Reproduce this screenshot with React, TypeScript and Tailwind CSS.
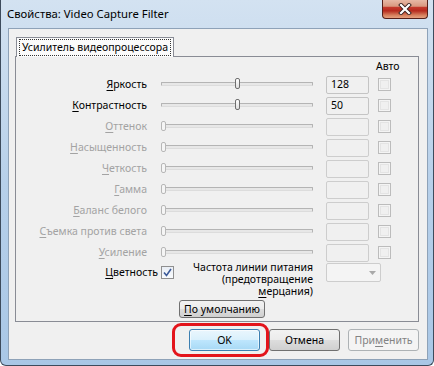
import React from "react";

type Row = { label: string; enabled: boolean; value?: string };

const rows: Row[] = [
  { label: "Яркость", enabled: true, value: "128" },
  { label: "Контрастность", enabled: true, value: "50" },
  { label: "Оттенок", enabled: false },
  { label: "Насыщенность", enabled: false },
  { label: "Четкость", enabled: false },
  { label: "Гамма", enabled: false },
  { label: "Баланс белого", enabled: false },
  { label: "Съемка против света", enabled: false },
  { label: "Усиление", enabled: false },
];

function Key({ label }: { label: string }) {
  return (
    <>
      <span className="underline decoration-1 underline-offset-[2px]">{label[0]}</span>
      {label.slice(1)}
    </>
  );
}

function Slider({ enabled }: { enabled: boolean }) {
  return (
    <div className="relative ml-[14px] h-[21px] w-[152px]">
      <div className="absolute left-0 right-0 top-[8px] h-[4px] rounded-[1px] border border-[#b4b4b4] border-b-[#dcdcdc] bg-[#e7e7e7]" />
      {enabled ? (
        <div className="absolute left-[74px] top-[4px] h-[11px] w-[5px] rounded-[2px] border border-[#6f6f6f] bg-gradient-to-b from-white to-[#dedede]" />
      ) : (
        <div className="absolute left-0 top-[5px] h-[10px] w-[5px] rounded-[2px] border border-[#b7b7b7] bg-[#f5f5f5]" />
      )}
    </div>
  );
}

function CheckBox() {
  return (
    <div className="h-[13px] w-[13px] border border-[#bcbcbc] bg-[#f4f4f4] p-px">
      <div className="h-full w-full border border-[#e4e4e4] bg-[#f0f0f0]" />
    </div>
  );
}

export default function App() {
  return (
    <div className="relative flex h-[366px] w-[434px] flex-col overflow-hidden rounded-b-[6px] border-x border-b border-[#3d4b5c] bg-gradient-to-b from-[#d3e2f1] via-[#b7d0ea] to-[#a9c7e6] font-['Noto_Sans',sans-serif] text-[10.5px] leading-none text-black">
      {/* title bar */}
      <div className="flex h-[28px] shrink-0 items-start justify-between">
        <div className="whitespace-nowrap pl-[6px] pt-[8px] text-[11.3px] text-black">Свойства: Video Capture Filter</div>
        <div className="mr-[5px] flex h-[19px] w-[46px] items-center justify-center rounded-b-[4px] border border-t-0 border-[#55201a] bg-[linear-gradient(to_bottom,#e7b8a5_0%,#d9987f_35%,#c5392c_40%,#b62a1e_60%,#d7825f_85%,#e6a07f_100%)]">
          <svg width="14" height="12" viewBox="0 0 14 12">
            <path d="M3 2 L11 10 M11 2 L3 10" stroke="#3a2320" strokeWidth="4" strokeLinecap="square" />
            <path d="M3 2 L11 10 M11 2 L3 10" stroke="#ffffff" strokeWidth="2.2" strokeLinecap="square" />
          </svg>
        </div>
      </div>

      {/* client area */}
      <div className="ml-[7px] flex h-[332px] w-[420px] flex-col border border-[#8ea2b8] bg-[#f0f0f0]">
        <div className="pl-[6px] pt-[8px]">
          {/* tab header */}
          <div className="relative z-10 -mb-px ml-px flex h-[20px] w-[158px] items-center justify-center border border-b-0 border-[#898c95] bg-[#fbfbfb]">
            <span className="whitespace-nowrap px-[2px] py-[2px] outline-1 outline-dotted outline-[#333]">Усилитель видеопроцессора</span>
          </div>
          {/* tab panel */}
          <div className="flex h-[266px] w-[404px] flex-col border border-[#898c95] bg-[#f0f0f0]">
            <div className="flex h-[17px] items-center pl-[360px] pt-[2px]">Авто</div>
            {rows.map((r) => (
              <div key={r.label} className="flex h-[21px] items-center">
                <div className={`w-[131px] whitespace-nowrap text-right ${r.enabled ? "text-black" : "text-[#a3a3a3]"}`}>
                  <Key label={r.label} />
                </div>
                <Slider enabled={r.enabled} />
                <div className={`ml-[13px] flex h-[18px] w-[43px] items-center rounded-[2px] border bg-[#f0f0f0] pl-[4px] ${r.enabled ? "border-[#c4c4c4]" : "border-[#cdcdcd]"}`}>
                  {r.value}
                </div>
                <div className="ml-[9px]">
                  <CheckBox />
                </div>
              </div>
            ))}
            {/* color row */}
            <div className="flex h-[34px] items-start">
              <div className="mt-[3px] flex w-[158px] items-center justify-end">
                <span className="whitespace-nowrap">
                  <Key label="Цветность" />
                </span>
                <div className="ml-[3px] flex h-[13px] w-[13px] items-center justify-center border border-[#8f8f8f] bg-gradient-to-b from-[#e9eef5] to-[#f9fbfd]">
                  <svg width="9" height="9" viewBox="0 0 9 9">
                    <path d="M1 4.5 L3.5 7.5 L8 1" fill="none" stroke="#3d5b99" strokeWidth="1.6" />
                  </svg>
                </div>
              </div>
              <div className="-mt-[2px] flex w-[139px] flex-col items-end">
                <div className="h-[12px] whitespace-nowrap leading-[12px]">Частота линии питания</div>
                <div className="h-[12px] whitespace-nowrap leading-[12px]">(предотвращение</div>
                <div className="h-[12px] whitespace-nowrap leading-[12px]">
                  <span className="underline decoration-1 underline-offset-[2px]">м</span>ерцания)
                </div>
              </div>
              <div className="ml-[13px] flex h-[19px] w-[55px] items-center justify-end rounded-[2px] border border-[#cdcdcd] bg-[#f4f4f4] pr-[4px]">
                <svg width="7" height="4" viewBox="0 0 7 4">
                  <path d="M0 0 L7 0 L3.5 4 Z" fill="#a9a9a9" />
                </svg>
              </div>
            </div>
            <div className="ml-[163px] mt-[3px] flex h-[18px] w-[86px] items-center justify-center whitespace-nowrap rounded-[3px] border border-[#707070] bg-[linear-gradient(to_bottom,#f2f2f2_0%,#ebebeb_50%,#dddddd_51%,#cfcfcf_100%)]">
              <Key label="По умолчанию" />
            </div>
          </div>
        </div>

        {/* buttons */}
        <div className="ml-[180px] mt-[7px] flex">
          <div className="flex h-[22px] w-[71px] items-center justify-center rounded-[3px] border border-[#3c7fb1] bg-[linear-gradient(to_bottom,#eaf6fd_0%,#d9f0fc_50%,#bee6fd_51%,#a7d9f5_100%)] shadow-[inset_0_0_0_1px_rgba(255,255,255,0.6)]">
            OK
          </div>
          <div className="ml-[9px] flex h-[22px] w-[71px] items-center justify-center rounded-[3px] border border-[#707070] bg-[linear-gradient(to_bottom,#f2f2f2_0%,#ebebeb_50%,#dddddd_51%,#cfcfcf_100%)]">
            Отмена
          </div>
          <div className="ml-[8px] flex h-[22px] w-[71px] items-center justify-center whitespace-nowrap rounded-[3px] border border-[#adb2b5] bg-[#f4f4f4] text-[#838383]">
            При<span className="underline decoration-1 underline-offset-[2px]">м</span>енить
          </div>
        </div>
      </div>

      {/* red annotation highlight */}
      <div className="pointer-events-none absolute left-[171px] top-[323px] h-[34px] w-[97px] rounded-[9px] border-[3px] border-[#e3141b]" />
    </div>
  );
}
